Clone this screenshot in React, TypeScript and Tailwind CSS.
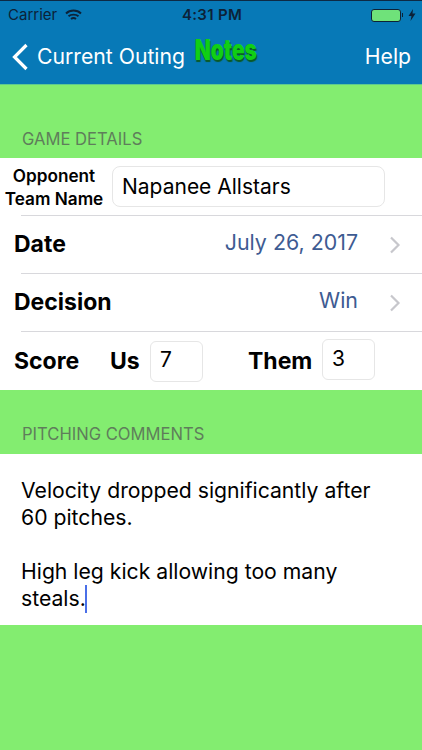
function Chevron() {
  return (
    <svg width="12" height="18" viewBox="0 0 12 18" className="text-[#c7c7cc]" fill="none" stroke="currentColor" strokeWidth="2.2">
      <path d="M2 1.5 L9.5 9 L2 16.5" />
    </svg>
  );
}

export default function App() {
  return (
    <div className="w-[422px] h-[750px] flex flex-col bg-[#83ed70] overflow-hidden font-['Inter','Liberation_Sans',sans-serif] text-black">
      <div className="h-[85px] bg-[#0779b7] border-t border-t-[#0d2a45] border-b border-b-[#5fc98f] flex flex-col shrink-0">
        <div className="h-[28px] flex items-center justify-between pl-[8px] pr-[6px] text-[15px] text-[#0c2238]">
          <div className="flex items-center gap-[8px] w-[140px]">
            <span>Carrier</span>
            <svg width="17" height="13" viewBox="0 0 17 13" fill="none" stroke="#0c2238" strokeWidth="1.9">
              <path d="M1 4.5 C5 0.5 12 0.5 16 4.5" />
              <path d="M3.5 7.3 C6 5 11 5 13.5 7.3" />
              <path d="M6 10 C7.5 8.8 9.5 8.8 11 10" />
            </svg>
          </div>
          <span className="font-semibold text-[15px] tracking-[0.3px]">4:31 PM</span>
          <div className="flex items-center justify-end w-[140px]">
            <div className="w-[30px] h-[13px] border border-[#0c2238] rounded-[3px] bg-[#6fe27a]" />
            <div className="w-[1.5px] h-[4px] bg-[#0c2238] ml-[1px]" />
            <svg width="8" height="12" viewBox="0 0 8 12" fill="#0c2238" className="ml-[5px]"><path d="M5 0 L0.5 7 H3.5 L2.5 12 L7.5 4.5 H4.5 Z" /></svg>
          </div>
        </div>
        <div className="flex-1 flex items-center pl-[11px] pr-[11px] text-white">
          <svg width="18" height="28" viewBox="0 0 18 28" fill="none" stroke="white" strokeWidth="3.2"><path d="M15.5 2 L3.5 14 L15.5 26" /></svg>
          <span className="text-[21.2px] ml-[8px]">Current Outing</span>
          <span className="w-[76px] -ml-[1px] mb-[13px] text-center text-[29px] leading-[34px] font-black text-[#10cf14] inline-block scale-x-[0.72] [text-shadow:1px_2px_1px_#0b5a26]">Notes</span>
          <span className="text-[21.2px] ml-auto">Help</span>
        </div>
      </div>
      <div className="h-[73px] shrink-0 flex items-end pl-[22px] pb-[9px] text-[16.6px] leading-[20px] text-[#5f7d5b]">GAME DETAILS</div>
      <div className="bg-white h-[232px] shrink-0 flex flex-col">
        <div className="h-[58px] flex items-center border-b border-[#d8d8dc] ml-[21px]">
          <div className="-ml-[21px] w-[108px] mr-[4px] shrink-0 text-center font-semibold text-[17.2px] leading-[23px]">Opponent<br />Team Name</div>
          <div className="w-[273px] h-[41px] border border-[#e6e6e6] rounded-[8px] flex items-center pl-[9px] text-[21px]">Napanee Allstars</div>
        </div>
        <div className="h-[58px] flex items-center border-b border-[#d8d8dc] ml-[21px] pr-[21px]">
          <span className="-ml-[7px] font-bold text-[23px]">Date</span>
          <span className="ml-auto text-[21.4px] text-[#3e5b92] mr-[31px] -mt-[4px]">July 26, 2017</span>
          <Chevron />
        </div>
        <div className="h-[58px] flex items-center border-b border-[#d8d8dc] ml-[21px] pr-[21px]">
          <span className="-ml-[7px] font-bold text-[23px]">Decision</span>
          <span className="ml-auto text-[21.4px] text-[#3e5b92] mr-[31px] -mt-[4px]">Win</span>
          <Chevron />
        </div>
        <div className="flex-1 flex items-center pl-[14px]">
          <span className="font-bold text-[23px] w-[96px]">Score</span>
          <span className="font-bold text-[23px] w-[40px]">Us</span>
          <div className="w-[53px] h-[41px] border border-[#e6e6e6] rounded-[6px] flex items-center pl-[9px] text-[21px] pb-[2px]">7</div>
          <span className="font-bold text-[23px] ml-[46px] w-[73px] -translate-x-[1px]">Them</span>
          <div className="w-[53px] h-[41px] -mt-[3px] border border-[#e6e6e6] rounded-[6px] flex items-center pl-[9px] text-[21px] pb-[2px]">3</div>
        </div>
      </div>
      <div className="h-[64px] shrink-0 flex items-end pl-[22px] pb-[10px] text-[16.6px] leading-[20px] text-[#5f7d5b]">PITCHING COMMENTS</div>
      <div className="bg-white h-[171px] shrink-0 pl-[21px] pr-[21px] pt-[23px] text-[21.2px] leading-[27px]">
        <div>Velocity dropped significantly after<br />60 pitches.</div>
        <div className="h-[27px]" />
        <div>High leg kick allowing too many<br />steals.<span className="inline-block w-[2.5px] h-[28px] -ml-[1px] bg-[#4a6fe8] align-top" /></div>
      </div>
    </div>
  );
}
